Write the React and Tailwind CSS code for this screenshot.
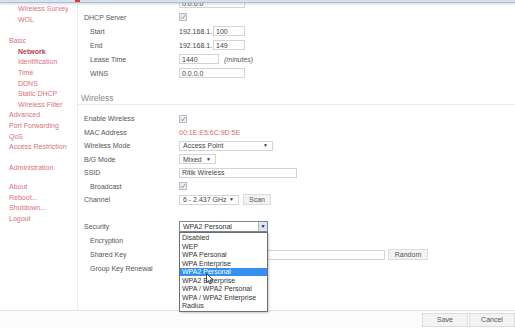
import React from 'react';

const sideItems = [
  { label: 'Wireless Survey', indent: true },
  { label: 'WOL', indent: true },
  { gap: 'h-[10.6px]' },
  { label: 'Basic' },
  { label: 'Network', indent: true, active: true },
  { label: 'Identification', indent: true },
  { label: 'Time', indent: true },
  { label: 'DDNS', indent: true },
  { label: 'Static DHCP', indent: true },
  { label: 'Wireless Filter', indent: true },
  { label: 'Advanced' },
  { label: 'Port Forwarding' },
  { label: 'QoS' },
  { label: 'Access Restriction' },
  { gap: 'h-[10.6px]' },
  { label: 'Administration' },
  { gap: 'h-[8px]' },
  { label: 'About' },
  { label: 'Reboot...' },
  { label: 'Shutdown...' },
  { label: 'Logout' },
];

const securityOptions = [
  'Disabled',
  'WEP',
  'WPA Personal',
  'WPA Enterprise',
  'WPA2 Personal',
  'WPA2 Enterprise',
  'WPA / WPA2 Personal',
  'WPA / WPA2 Enterprise',
  'Radius',
];

const Check = () => (
  <span className="flex h-[8px] w-[8px] items-center justify-center border border-[#b8bcc4] bg-[#eceef2]">
    <svg width="6" height="6" viewBox="0 0 6 6">
      <path d="M0.8 3.2 L2.4 4.8 L5.3 1" fill="none" stroke="#8a8f99" strokeWidth="1" />
    </svg>
  </span>
);

const TextBox = ({ value, width }) => (
  <span className={`flex h-[10px] items-center border border-[#d4d4d4] bg-white px-[2px] text-[#444] ${width}`}>
    {value}
  </span>
);

const Select = ({ value, width }) => (
  <span className={`flex h-[10px] items-center justify-between border border-[#d4d4d4] bg-white pl-[3px] pr-[4px] text-[#444] ${width}`}>
    <span>{value}</span>
    <span className="text-[5px] text-[#333]">▼</span>
  </span>
);

const Row = ({ label, sub, h = 'h-[14px]', children }) => (
  <div className={`flex items-center ${h}`}>
    <div className={`w-[101px] shrink-0 text-[#555] ${sub ? 'pl-[12px]' : 'pl-[6px]'}`}>{label}</div>
    <div className="flex items-center gap-[3px]">{children}</div>
  </div>
);

const Btn = ({ children, className = '' }) => (
  <span className={`flex h-[11px] items-center justify-center border border-[#dcdcdc] bg-[#f3f3f3] px-[6px] text-[#555] ${className}`}>
    {children}
  </span>
);

export default function App() {
  return (
    <div
      className="relative h-[328px] w-[515px] overflow-hidden bg-white text-[7px] leading-none"
      style={{ fontFamily: '"Liberation Sans", Arial, sans-serif' }}
    >
      {/* browser toolbar edge */}
      <div className="absolute left-0 right-0 top-0 z-10 h-[3px] border-b border-[#b4bdcc] bg-[#d8e1f0] shadow-[0_1px_3px_rgba(120,130,150,0.35)]">
        <span className="absolute left-[75px] top-0 h-[2px] w-[5px] bg-[#d83a3a]" />
      </div>

      <div className="flex h-[310px]">
        {/* sidebar */}
        <aside className="w-[77px] shrink-0 pt-[3.7px]">
          {sideItems.map((item, i) =>
            item.gap ? (
              <div key={i} className={item.gap} />
            ) : (
              <div
                key={i}
                className={`flex h-[10.6px] items-center ${item.indent ? 'pl-[18px]' : 'pl-[9px]'} ${
                  item.active ? 'font-bold text-[#b8404e]' : 'text-[#d8707c]'
                }`}
              >
                {item.label}
              </div>
            )
          )}
        </aside>

        {/* main settings */}
        <main className="flex-1 border-l border-[#ececec]">
          <div className="-mt-[4px]">
            <Row label="">
              <TextBox value="0.0.0.0" width="w-[66px]" />
            </Row>
            <Row label="DHCP Server">
              <Check />
            </Row>
            <Row label="Start" sub>
              <span className="w-[31px] text-[#444]">192.168.1.</span>
              <TextBox value="100" width="w-[32px]" />
            </Row>
            <Row label="End" sub>
              <span className="w-[31px] text-[#444]">192.168.1.</span>
              <TextBox value="149" width="w-[32px]" />
            </Row>
            <Row label="Lease Time" sub>
              <TextBox value="1440" width="w-[40px]" />
              <span className="ml-[2px] italic text-[#555]">(minutes)</span>
            </Row>
            <Row label="WINS" sub>
              <TextBox value="0.0.0.0" width="w-[66px]" />
            </Row>
          </div>

          <div className="mt-[12px] flex h-[13px] items-center border-b border-[#ececec] pl-[3px] text-[8.5px] text-[#888]">
            Wireless
          </div>

          <div className="pt-[7px]">
            <Row label="Enable Wireless" h="h-[13.5px]">
              <Check />
            </Row>
            <Row label="MAC Address" h="h-[13.5px]">
              <span className="text-[#d86a70]">00:1E:E5:6C:9D:5E</span>
            </Row>
            <Row label="Wireless Mode" h="h-[13.5px]">
              <Select value="Access Point" width="w-[94px]" />
            </Row>
            <Row label="B/G Mode" h="h-[13.5px]">
              <Select value="Mixed" width="w-[37px]" />
            </Row>
            <Row label="SSID" h="h-[13.5px]">
              <TextBox value="Ritik Wireless" width="w-[118px]" />
            </Row>
            <Row label="Broadcast" sub h="h-[13.5px]">
              <Check />
            </Row>
            <Row label="Channel" h="h-[13.5px]">
              <Select value="6 - 2.437 GHz" width="w-[60px]" />
              <Btn className="ml-[1px] h-[11px] w-[28px]">Scan</Btn>
            </Row>
          </div>

          <div className="pt-[13px]">
            <Row label="Security">
              <span className="relative z-20 flex h-[11px] w-[89px] items-stretch border border-[#7a8696] bg-white text-[#333]">
                <span className="flex flex-1 items-center pl-[3px]">WPA2 Personal</span>
                <span className="flex w-[9px] items-center justify-center border-l border-[#a8b6c8] bg-[#dbe5f3] text-[5px] text-[#223]">▼</span>
                <div className="absolute left-[-1px] top-[10px] w-[89px] border border-[#6e6e6e] bg-white py-[0.5px] shadow-[1px_1px_2px_rgba(0,0,0,0.2)]">
                  {securityOptions.map((opt) => (
                    <div
                      key={opt}
                      className={`flex h-[8.5px] items-center pl-[2px] ${
                        opt === 'WPA2 Personal' ? 'bg-[#3390f0] text-white' : 'text-[#333]'
                      }`}
                    >
                      {opt}
                    </div>
                  ))}
                  <svg className="absolute left-[26px] top-[40px]" width="8" height="12" viewBox="0 0 8 12">
                    <path d="M0.5 0.5 L0.5 9.5 L2.6 7.6 L4 11 L5.4 10.4 L4 7.1 L7 7.1 Z" fill="white" stroke="#222" strokeWidth="0.8" strokeLinejoin="round" />
                  </svg>
                </div>
              </span>
            </Row>
            <Row label="Encryption" sub>
              <Select value="" width="w-[40px]" />
            </Row>
            <Row label="Shared Key" sub>
              <TextBox value="" width="w-[206px]" />
              <Btn className="h-[11px] w-[40px]">Random</Btn>
            </Row>
            <Row label="Group Key Renewal" sub>
              <TextBox value="" width="w-[40px]" />
            </Row>
          </div>
        </main>
      </div>

      {/* footer */}
      <div className="flex h-[18px] items-center justify-end border-t border-[#e2e2e2] bg-[#fcfcfc]">
        <Btn className="h-[14px] w-[46px]">Save</Btn>
        <Btn className="ml-[1px] h-[14px] w-[46px]">Cancel</Btn>
      </div>
    </div>
  );
}
